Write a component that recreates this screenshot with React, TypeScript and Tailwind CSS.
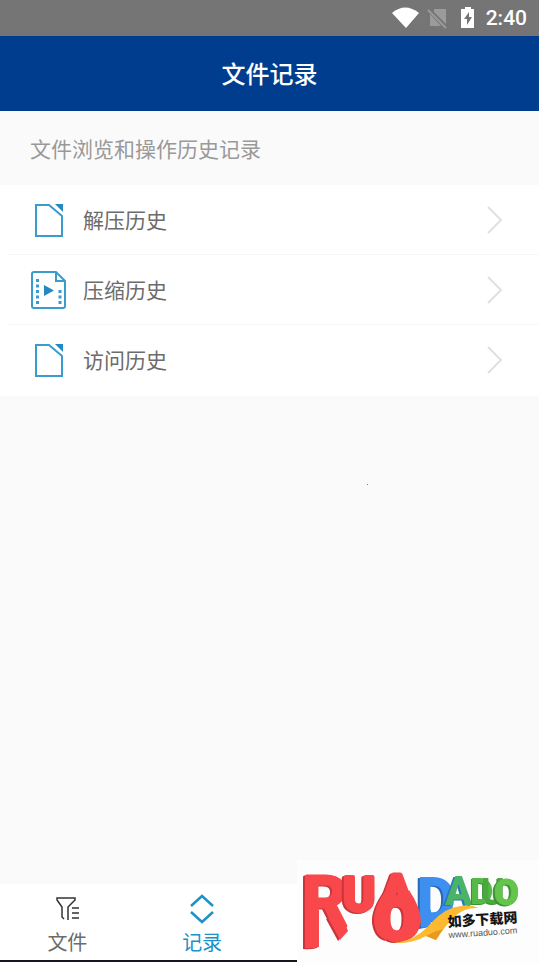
const cjk = "font-['Roboto','Noto_Sans_CJK_SC',sans-serif]";

function DocIcon() {
  return (
    <svg width="38" height="38" viewBox="0 0 38 38" fill="none" aria-hidden="true">
      <path d="M6 4H19L32 15V35H6Z" stroke="#3a9ccc" strokeWidth="2" />
      <path d="M25 3H33V11Z" fill="#2389c2" />
    </svg>
  );
}

function FilmIcon() {
  return (
    <svg width="38" height="38" viewBox="0 0 38 38" fill="none" aria-hidden="true">
      <path d="M4 1H26L35 10V35Q35 37 33 37H4Q2 37 2 35V3Q2 1 4 1Z" stroke="#3a9ccc" strokeWidth="2" />
      <path d="M26 1V10H35" stroke="#3a9ccc" strokeWidth="2" />
      <path d="M14 14V25L24 19.500Z" fill="#2389c2" />
      <path d="M7.500 8V33" stroke="#3a9ccc" strokeWidth="3" strokeDasharray="3 2.500" />
      <path d="M30 19V33" stroke="#3a9ccc" strokeWidth="3" strokeDasharray="3 2.500" />
    </svg>
  );
}

function Chevron() {
  return (
    <svg width="16" height="28" viewBox="0 0 16 28" fill="none" aria-hidden="true">
      <path d="M1 1L14 14L1 27" stroke="#e0e0e0" strokeWidth="2" />
    </svg>
  );
}

const rows = [
  { label: "解压历史", Icon: DocIcon },
  { label: "压缩历史", Icon: FilmIcon },
  { label: "访问历史", Icon: DocIcon },
];

function Brand() {
  return (
    <svg
      width="242"
      height="103"
      viewBox="0 0 242 103"
      fontFamily="Roboto, sans-serif"
      fontWeight="900"
      strokeLinejoin="round"
      role="img"
      aria-label="RUADADUO 如多下载网"
    >
      <g className="drop-shadow-[-2px_1px_0_#c9353b]" fill="#f8484c" stroke="#f8484c">
        <path d="M8 50H22V87Q15 89 8 88Z" stroke="none" />
        <path d="M31 58L46 58L51 71L43 80Z" stroke="none" />
        <text x="5" y="66" fontSize="71" fontWeight="700" strokeWidth="3">R</text>
      </g>
      <g className="drop-shadow-[-2px_1px_0_#c9353b]" fill="#f8484c" stroke="#f8484c">
        <text x="46" y="51" fontSize="49" fontWeight="700" strokeWidth="4">U</text>
      </g>
      <g className="drop-shadow-[-2px_1px_0_#2868b4]" fill="#3d8ff0" stroke="#3d8ff0">
        <path d="M124 50H134V66L124 68Z" stroke="none" />
        <text x="120" y="60" fontSize="59" fontWeight="700" strokeWidth="2">D</text>
      </g>
      <g className="drop-shadow-[-2px_1px_0_#c9353b]" fill="#f8484c" stroke="#f8484c">
        <path d="M89 30Q76 48 77 62Q79 77 90 80L87 60L94 40Z" stroke="none" />
        <path d="M112 30Q124 48 124 62Q121 77 110 80L114 60L106 40Z" stroke="none" />
        <text x="83" y="51" fontSize="50" fontWeight="700" strokeWidth="5">A</text>
        <text x="80" y="79" fontSize="58" fontWeight="700" strokeWidth="5">O</text>
      </g>
      <g className="drop-shadow-[-2px_1px_0_#2876bd]" fill="#4ab368" stroke="none">
        <text x="148" y="45" fontSize="40">A</text>
      </g>
      <g className="drop-shadow-[-1px_1px_0_#3a9232]">
        <text x="173" y="44" fontSize="36" fill="#55b947">D</text>
        <text x="184" y="44" fontSize="36" fontWeight="700" fill="#4aa83e">U</text>
      </g>
      <g className="drop-shadow-[-2px_1px_0_#3a9232]" fill="#64c44c" stroke="#64c44c">
        <text x="197" y="45" fontSize="36">O</text>
      </g>
      <path d="M97 83Q120 80 134 63Q149 47 164 46Q172 44 182 48Q167 47 157 57Q148 66 139 80L129 76Q115 84 97 83Z" fill="#fdb931" />
      <path d="M129 76L139 80L146 69Q138 71 129 76Z" fill="#e69b20" />
      <g transform="rotate(-4 152 68)" stroke="none">
        <text x="151" y="67" fontSize="14" fontFamily="Noto Sans CJK SC, sans-serif" fill="#151515">如多下载网</text>
        <text x="151" y="78" fontSize="9" fontWeight="400" fontFamily="Liberation Sans, sans-serif" fill="#555">www.ruaduo.com</text>
      </g>
    </svg>
  );
}

export default function App() {
  return (
    <div className={`${cjk} flex min-h-screen flex-col bg-[#fafafa] text-[#6c6c6c]`}>
      <div className="flex h-9 items-center justify-end bg-[#757575] pr-3 text-white">
        <svg width="84" height="24" viewBox="0 0 84 24" aria-hidden="true">
          <path d="M0 7Q13 -4 27 7L14 22Z" fill="#fff" />
          <path d="M42 3H54V18L42 6ZM38 8L49 20H38Z" fill="#9b9b9b" />
          <path d="M36 4L54 22" stroke="#9b9b9b" strokeWidth="2" />
          <path d="M73 1H79V3H82V22H69V3H73Z" fill="#fff" />
          <path d="M77 6L72 13H75V19L80 11H77Z" fill="#757575" />
        </svg>
        <span className="ml-[10px] pt-0.5 text-[21px] font-medium">2:40</span>
      </div>
      <header className="flex h-[75px] items-center justify-center bg-[#003d8f] text-white">
        <h1 className="pt-0.5 text-2xl font-medium">文件记录</h1>
      </header>
      <main className="flex-1">
        <p className="flex h-[74px] items-center px-[30px] pt-1.5 text-[21px] text-[#999]">文件浏览和操作历史记录</p>
        <ul className="bg-white pb-px">
          {rows.map(({ label, Icon }) => (
            <li key={label} className="group">
              <button type="button" className="flex h-[70px] w-full items-center pr-9 pl-[30px] text-left text-[21px]">
                <Icon />
                <span className="ml-[15px] flex-1 pt-1">{label}</span>
                <Chevron />
              </button>
              <div className="-mt-px ml-2 h-px bg-[#f7f7f7] group-last:bg-white" />
            </li>
          ))}
        </ul>
        <div className="mt-22 ml-[68%] size-px bg-[#2aa58a]" />
      </main>
      <div className="relative bg-white pb-px">
        <nav className="grid h-[78px] grid-cols-4 border-b-2 border-[#15151d] text-xl">
          <button type="button" className="flex flex-col items-center pt-[10px]">
            <svg width="26" height="30" viewBox="0 -2 26 30" fill="none" stroke="#333" strokeWidth="1.500" aria-hidden="true">
              <path d="M10 23L8 21V11L3 4V2H21V4L14 11V24M18 12H25M18 17H25M18 22H25" />
            </svg>
            <span className="mt-[5px]">文件</span>
          </button>
          <button type="button" className="flex flex-col items-center pt-[10px] text-[#2090c8]">
            <svg width="26" height="30" viewBox="0 0 26 30" fill="none" stroke="#2090c8" strokeWidth="2.500" aria-hidden="true">
              <path d="M2 12L13 2L24 12M2 18L13 28L24 18" />
            </svg>
            <span className="mt-[5px]">记录</span>
          </button>
        </nav>
        <div className="absolute right-0 bottom-0 bg-[#fdfdfd]">
          <Brand />
        </div>
      </div>
    </div>
  );
}
